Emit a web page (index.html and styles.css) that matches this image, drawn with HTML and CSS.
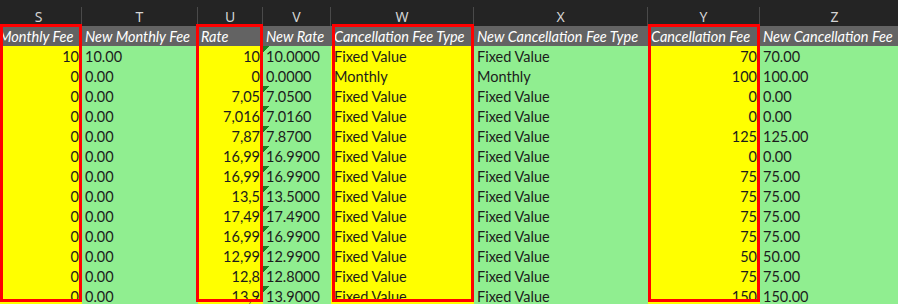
FILE: index.html
```html
<!DOCTYPE html>
<html>
<head>
<meta charset="utf-8">
<link rel="stylesheet" href="styles.css">
</head>
<body>
<div class="stack">
<div class="sheet">
  <div class="col">S</div><div class="col">T</div><div class="col">U</div><div class="col">V</div><div class="col">W</div><div class="col">X</div><div class="col">Y</div><div class="col">Z</div>

  <div class="hd">Monthly Fee</div><div class="hd">New Monthly Fee</div><div class="hd">Rate</div><div class="hd">New Rate</div><div class="hd">Cancellation Fee Type</div><div class="hd">New Cancellation Fee Type</div><div class="hd">Cancellation Fee</div><div class="hd">New Cancellation Fee</div>

  <div class="y num">10</div><div class="g">10.00</div><div class="y num">10</div><div class="g err">10.0000</div><div class="y">Fixed Value</div><div class="g">Fixed Value</div><div class="y num">70</div><div class="g">70.00</div>
  <div class="y num">0</div><div class="g">0.00</div><div class="y num">0</div><div class="g">0.0000</div><div class="y">Monthly</div><div class="g">Monthly</div><div class="y num">100</div><div class="g">100.00</div>
  <div class="y num">0</div><div class="g">0.00</div><div class="y num">7,05</div><div class="g err">7.0500</div><div class="y">Fixed Value</div><div class="g">Fixed Value</div><div class="y num">0</div><div class="g">0.00</div>
  <div class="y num">0</div><div class="g">0.00</div><div class="y num">7,016</div><div class="g err">7.0160</div><div class="y">Fixed Value</div><div class="g">Fixed Value</div><div class="y num">0</div><div class="g">0.00</div>
  <div class="y num">0</div><div class="g">0.00</div><div class="y num">7,87</div><div class="g err">7.8700</div><div class="y">Fixed Value</div><div class="g">Fixed Value</div><div class="y num">125</div><div class="g">125.00</div>
  <div class="y num">0</div><div class="g">0.00</div><div class="y num">16,99</div><div class="g err">16.9900</div><div class="y">Fixed Value</div><div class="g">Fixed Value</div><div class="y num">0</div><div class="g">0.00</div>
  <div class="y num">0</div><div class="g">0.00</div><div class="y num">16,99</div><div class="g err">16.9900</div><div class="y">Fixed Value</div><div class="g">Fixed Value</div><div class="y num">75</div><div class="g">75.00</div>
  <div class="y num">0</div><div class="g">0.00</div><div class="y num">13,5</div><div class="g err">13.5000</div><div class="y">Fixed Value</div><div class="g">Fixed Value</div><div class="y num">75</div><div class="g">75.00</div>
  <div class="y num">0</div><div class="g">0.00</div><div class="y num">17,49</div><div class="g err">17.4900</div><div class="y">Fixed Value</div><div class="g">Fixed Value</div><div class="y num">75</div><div class="g">75.00</div>
  <div class="y num">0</div><div class="g">0.00</div><div class="y num">16,99</div><div class="g err">16.9900</div><div class="y">Fixed Value</div><div class="g">Fixed Value</div><div class="y num">75</div><div class="g">75.00</div>
  <div class="y num">0</div><div class="g">0.00</div><div class="y num">12,99</div><div class="g err">12.9900</div><div class="y">Fixed Value</div><div class="g">Fixed Value</div><div class="y num">50</div><div class="g">50.00</div>
  <div class="y num">0</div><div class="g">0.00</div><div class="y num">12,8</div><div class="g err">12.8000</div><div class="y">Fixed Value</div><div class="g">Fixed Value</div><div class="y num">75</div><div class="g">75.00</div>
  <div class="y num">0</div><div class="g">0.00</div><div class="y num">13,9</div><div class="g err">13.9000</div><div class="y">Fixed Value</div><div class="g">Fixed Value</div><div class="y num">150</div><div class="g">150.00</div>
</div>
<div class="marks">
  <div class="box box-s"></div>
  <div class="box box-u"></div>
  <div class="box box-w"></div>
  <div class="box box-y"></div>
</div>
</div>
</body>
</html>
```

FILE: styles.css
```css
html, body {
  margin: 0;
  padding: 0;
  width: 898px;
  height: 304px;
  overflow: hidden;
  background: #242424;
}

.stack {
  display: grid;
  margin-left: -4px;
}

.sheet, .marks {
  grid-area: 1 / 1;
  display: grid;
  grid-template-columns: 86px 116px 65px 68px 143px 174px 112px 150px;
  grid-template-rows: 26px repeat(14, 20px);
}

.sheet {
  font-family: "Lato", "Liberation Sans", sans-serif;
  font-size: 14.5px;
}

.marks {
  pointer-events: none;
}

.col {
  margin-top: 7px;
  height: 19px;
  line-height: 19px;
  text-align: center;
  color: #d4d4d4;
  font-family: "Noto Sans", "Open Sans", sans-serif;
  font-size: 14px;
  border-right: 1px solid #4a4a4a;
  background: #242424;
}

.hd {
  background: #636363;
  color: #ffffff;
  font-style: italic;
  line-height: 20px;
  padding: 1px 3px 0;
  white-space: nowrap;
  overflow: hidden;
}

.y, .g {
  line-height: 20px;
  padding: 1px 3px 0;
  white-space: nowrap;
  overflow: hidden;
  color: #1c1c1c;
}

.y { background: #ffff00; }
.g { background: #90ee90; }

.num { text-align: right; }

.err {
  background: linear-gradient(135deg, #1a7f26 4.3px, #90ee90 4.3px);
}

.box {
  grid-row: 2 / -1;
  border: 3px solid #ff0000;
  margin: -2px 0 4px -2px;
}

.box-s { grid-column: 1; margin-left: 4px; }
.box-u { grid-column: 3; }
.box-w { grid-column: 5; margin-left: 1px; }
.box-y { grid-column: 7; margin-left: 0; }
```
